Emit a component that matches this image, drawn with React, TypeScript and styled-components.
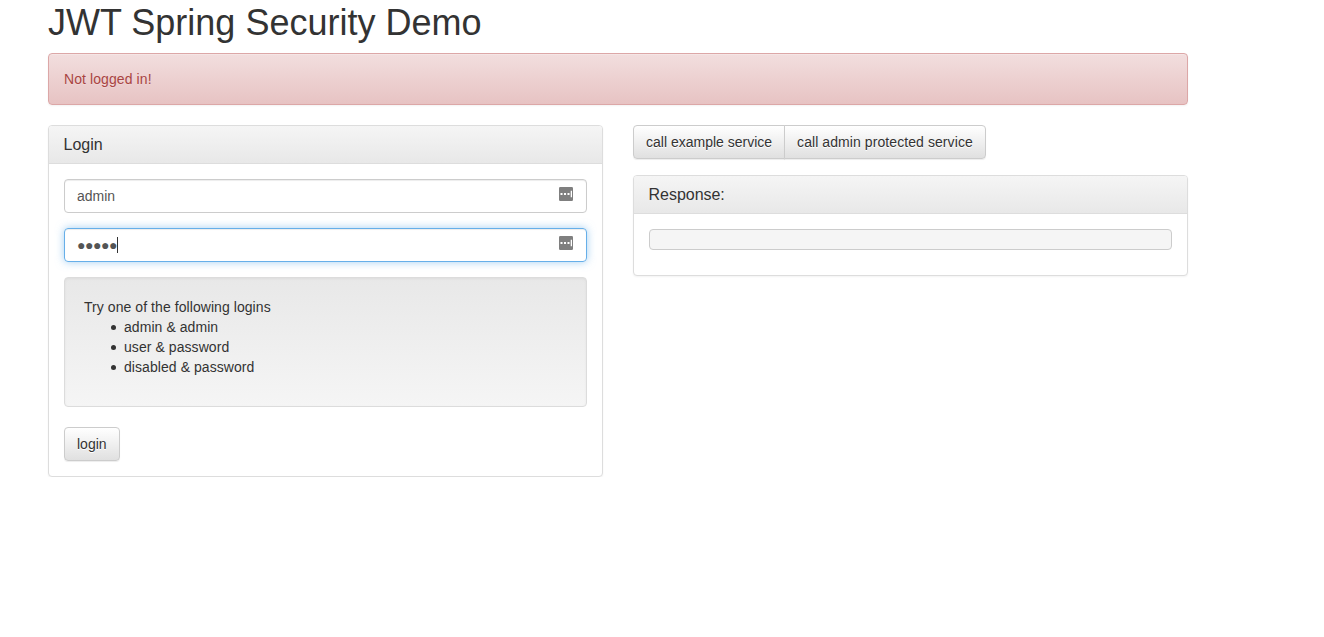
import React from "react";
import styled, { createGlobalStyle, css } from "styled-components";

const GlobalStyle = createGlobalStyle`
  *, *::before, *::after { box-sizing: border-box; }
  body {
    margin: 0;
    background: #fff;
    color: #333;
    font-family: "Liberation Sans", Arial, sans-serif;
    font-size: 14px;
    line-height: 20px;
  }
`;

const Container = styled.main`
  width: 1140px;
  margin-left: 48px;
  padding-top: 3px;
`;

const Title = styled.h1`
  margin: 0 0 10px;
  font-size: 36px;
  font-weight: 400;
  line-height: 40px;
`;

const Alert = styled.div`
  height: 52px;
  margin-bottom: 20px;
  padding: 15px;
  color: #a94442;
  letter-spacing: 0.09px;
  border: 1px solid #dca7a7;
  border-radius: 4px;
  background: linear-gradient(to bottom, #f2dede 0%, #e7c3c3 100%);
  box-shadow: inset 0 1px 0 rgba(255, 255, 255, 0.25), 0 1px 2px rgba(0, 0, 0, 0.05);
  text-shadow: 0 1px 0 rgba(255, 255, 255, 0.2);
`;

const Columns = styled.div`
  display: grid;
  grid-template-columns: 1fr 1fr;
  align-items: start;
  gap: 30px;
`;

const Panel = styled.section`
  border: 1px solid #ddd;
  border-radius: 4px;
  background: #fff;
  box-shadow: 0 1px 2px rgba(0, 0, 0, 0.05);
`;

const PanelHeading = styled.header`
  height: 38px;
  padding: 10px 15px 10px 14.6px;
  border-bottom: 1px solid #ddd;
  border-radius: 3px 3px 0 0;
  background: linear-gradient(to bottom, #f5f5f5 0%, #e8e8e8 100%);
`;

const PanelTitle = styled.h3`
  margin: 0;
  font-size: 16px;
  font-weight: 400;
  line-height: 17.6px;
  letter-spacing: -0.04px;
`;

const PanelBody = styled.div`
  padding: 15px;
`;

const Field = styled.div<{ $focused?: boolean }>`
  display: flex;
  align-items: center;
  height: 34px;
  margin-bottom: 15px;
  padding: 0 13px 0 12px;
  color: #555;
  border: 1px solid #ccc;
  border-radius: 4px;
  box-shadow: inset 0 1px 1px rgba(0, 0, 0, 0.075);
  ${({ $focused }) =>
    $focused &&
    css`
      border-color: #66afe9;
      box-shadow: inset 0 1px 1px rgba(0, 0, 0, 0.075), 0 0 8px rgba(102, 175, 233, 0.6);
    `}
`;

const Mask = styled.span`
  letter-spacing: -0.46px;
`;

const Caret = styled.span`
  width: 1px;
  height: 16px;
  background: #333;
`;

const FieldIcon = styled.svg`
  width: 14px;
  height: 14px;
  margin: 0 0 4px auto;
`;

const Well = styled.div`
  height: 130px;
  margin-bottom: 20px;
  padding: 19px;
  letter-spacing: 0.065px;
  border: 1px solid #dcdcdc;
  border-radius: 4px;
  background: linear-gradient(to bottom, #e8e8e8 0%, #f5f5f5 100%);
  box-shadow: inset 0 1px 3px rgba(0, 0, 0, 0.05), 0 1px 0 rgba(255, 255, 255, 0.1);
`;

const LoginList = styled.ul`
  margin: 0;
  padding-left: 40px;
  list-style: none;
`;

const LoginItem = styled.li`
  display: flex;
  align-items: center;

  &::before {
    content: "";
    width: 5px;
    height: 5px;
    margin: 1px 8px 0 -13px;
    border-radius: 50%;
    background: #333;
  }
`;

const Button = styled.button<{ $tracking?: number }>`
  height: 34px;
  padding: 0 12px;
  color: #333;
  font: inherit;
  letter-spacing: ${({ $tracking = 0 }) => $tracking}px;
  border: 1px solid #ccc;
  border-radius: 4px;
  background: linear-gradient(to bottom, #fff 0%, #e0e0e0 100%);
  box-shadow: inset 0 1px 0 rgba(255, 255, 255, 0.15), 0 1px 1px rgba(0, 0, 0, 0.075);
  text-shadow: 0 1px 0 #fff;
  white-space: nowrap;
`;

const ButtonGroup = styled.div`
  display: flex;
  margin-bottom: 16px;

  ${Button}:first-child {
    border-radius: 4px 0 0 4px;
  }
  ${Button}:last-child {
    margin-left: -1px;
    border-radius: 0 4px 4px 0;
  }
`;

const Output = styled.pre`
  height: 21px;
  margin: 0 0 10px;
  border: 1px solid #ccc;
  border-radius: 4px;
  background: #f5f5f5;
`;

const KeyIcon = () => (
  <FieldIcon viewBox="0 0 14 14" aria-hidden="true">
    <rect width="14" height="14" rx="1.2" fill="#7f7f7f" />
    <path d="M1.5 6h2v2h-2zM5 6h2v2H5zM8.5 6h2v2h-2zM11.7 3.8h1.3v6.4h-1.3z" fill="#fff" />
  </FieldIcon>
);

export default function App() {
  return (
    <>
      <GlobalStyle />
      <Container>
        <Title>JWT Spring Security Demo</Title>
        <Alert>Not logged in!</Alert>
        <Columns>
          <Panel>
            <PanelHeading>
              <PanelTitle>Login</PanelTitle>
            </PanelHeading>
            <PanelBody>
              <Field>
                admin
                <KeyIcon />
              </Field>
              <Field $focused>
                <Mask>●●●●●</Mask>
                <Caret />
                <KeyIcon />
              </Field>
              <Well>
                Try one of the following logins
                <LoginList>
                  <LoginItem>admin &amp; admin</LoginItem>
                  <LoginItem>user &amp; password</LoginItem>
                  <LoginItem>disabled &amp; password</LoginItem>
                </LoginList>
              </Well>
              <Button type="button">login</Button>
            </PanelBody>
          </Panel>
          <div>
            <ButtonGroup>
              <Button type="button">call example service</Button>
              <Button type="button" $tracking={0.08}>
                call admin protected service
              </Button>
            </ButtonGroup>
            <Panel>
              <PanelHeading>
                <PanelTitle>Response:</PanelTitle>
              </PanelHeading>
              <PanelBody>
                <Output />
              </PanelBody>
            </Panel>
          </div>
        </Columns>
      </Container>
    </>
  );
}
